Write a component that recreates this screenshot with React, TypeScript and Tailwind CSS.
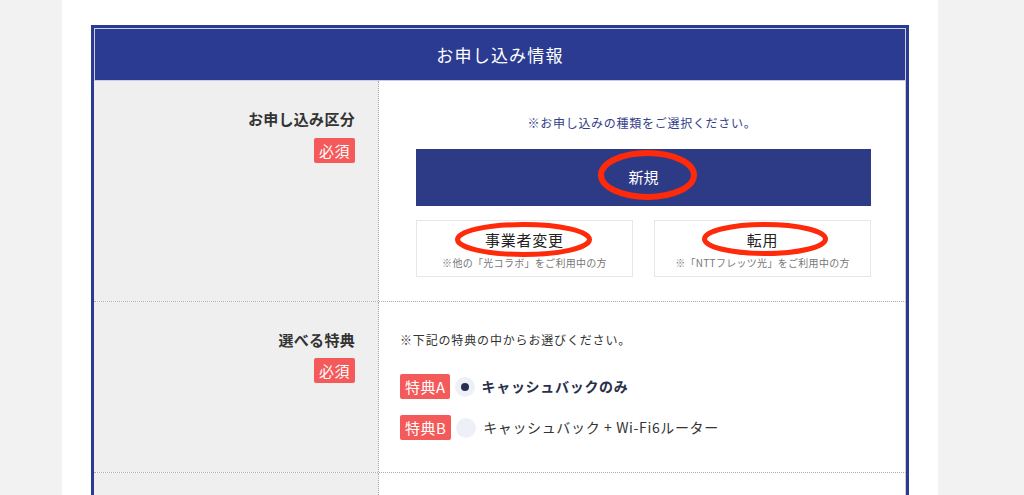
import React from "react";

const font = { fontFamily: '"Noto Sans CJK JP", "Noto Sans", sans-serif' };

function Ellipse({ w, h, sw, className }: { w: number; h: number; sw: number; className: string }) {
  return (
    <svg className={className} width={w} height={h} viewBox={`0 0 ${w} ${h}`}>
      <ellipse cx={w / 2} cy={h / 2} rx={w / 2 - sw / 2} ry={h / 2 - sw / 2} fill="none" stroke="#fe2a0a" strokeWidth={sw} />
    </svg>
  );
}

function Badge({ children }: { children: React.ReactNode }) {
  return (
    <span className="inline-flex h-[25px] items-center rounded-[2px] bg-[#f45a5a] px-[5px] text-[15px] leading-none tracking-[0.03em] text-white">
      {children}
    </span>
  );
}

export default function App() {
  return (
    <div style={font} className="min-h-screen w-full overflow-hidden bg-[#f2f2f2]">
      <div className="ml-[62px] w-[876px] bg-white px-[29px] pt-[25px] h-[495px]">
        <div className="w-[818px] border-[3px] border-[#2b3b92]">
          <div className="flex h-[53px] items-center justify-center border border-[#c9cce3] bg-[#2b3b92] text-[17px] tracking-[0.07em] text-white">
            お申し込み情報
          </div>
          {/* Row 1 */}
          <div className="flex h-[221px] border-b border-dotted border-[#aaaaaa]">
            <div className="flex w-[285px] flex-col items-end border-r border-dotted border-[#aaaaaa] bg-[#efefef] pr-[23px] pt-[27px]">
              <div className="text-[15px] font-bold leading-[22px] tracking-[0.02em] text-[#333]">お申し込み区分</div>
              <div className="mt-[8px]">
                <Badge>必須</Badge>
              </div>
            </div>
            <div className="flex flex-1 flex-col border-r border-[#cccccc] pt-[33px]">
              <div className="text-center text-[12px] leading-[18px] tracking-[0.06em] text-[#34408a]">
                ※お申し込みの種類をご選択ください。
              </div>
              <div className="relative ml-[37px] mt-[17px] flex h-[57px] w-[455px] items-center justify-center bg-[#2d3a86] text-[15px] text-white">
                新規
                <Ellipse className="absolute left-[182px] top-[1px]" w={99} h={50} sw={6} />
              </div>
              <div className="ml-[37px] mt-[14px] flex w-[455px] gap-[21px]">
                <div className="relative flex h-[57px] w-[217px] flex-col items-center border border-[#e6e6e6] pt-[9px]">
                  <div className="text-[15px] leading-[20px] tracking-[0.05em] text-[#222]">事業者変更</div>
                  <div className="mt-[6px] text-[10px] leading-[14px] tracking-[0.03em] text-[#777]">※他の「光コラボ」をご利用中の方</div>
                  <Ellipse className="absolute left-[38px] top-[1px]" w={137} h={35} sw={5} />
                </div>
                <div className="relative flex h-[57px] w-[217px] flex-col items-center border border-[#e6e6e6] pt-[9px]">
                  <div className="text-[15px] leading-[20px] tracking-[0.05em] text-[#222]">転用</div>
                  <div className="mt-[6px] text-[10px] leading-[14px] tracking-[0.03em] text-[#777]">※「NTTフレッツ光」をご利用中の方</div>
                  <Ellipse className="absolute left-[47px] top-[1px]" w={126} h={34} sw={5} />
                </div>
              </div>
            </div>
          </div>
          {/* Row 2 */}
          <div className="flex h-[171px] border-b border-dotted border-[#aaaaaa]">
            <div className="flex w-[285px] flex-col items-end border-r border-dotted border-[#aaaaaa] bg-[#efefef] pr-[23px] pt-[27px]">
              <div className="text-[15px] font-bold leading-[22px] tracking-[0.02em] text-[#333]">選べる特典</div>
              <div className="mt-[7px]">
                <Badge>必須</Badge>
              </div>
            </div>
            <div className="flex flex-1 flex-col border-r border-[#cccccc] pl-[21px] pt-[29px]">
              <div className="text-[12px] leading-[18px] tracking-[0.07em] text-[#333]">※下記の特典の中からお選びください。</div>
              <div className="mt-[25px] flex items-center">
                <Badge>特典A</Badge>
                <span className="ml-[5px] flex h-[20px] w-[20px] items-center justify-center rounded-full bg-[#edf0f7]">
                  <span className="h-[8px] w-[8px] rounded-full bg-[#282f50]" />
                </span>
                <span className="ml-[6px] text-[14px] font-bold tracking-[0.05em] text-[#2a2f4a]">キャッシュバックのみ</span>
              </div>
              <div className="mt-[16px] flex items-center">
                <Badge>特典B</Badge>
                <span className="ml-[5px] h-[20px] w-[20px] rounded-full bg-[#edf0f7]" />
                <span className="ml-[7px] text-[14px] tracking-[0.045em] text-[#333]">キャッシュバック + Wi-Fi6ルーター</span>
              </div>
            </div>
          </div>
          {/* Row 3 */}
          <div className="flex h-[60px]">
            <div className="w-[285px] border-r border-dotted border-[#aaaaaa] bg-[#efefef]" />
            <div className="flex-1 border-r border-[#cccccc]" />
          </div>
        </div>
      </div>
    </div>
  );
}
